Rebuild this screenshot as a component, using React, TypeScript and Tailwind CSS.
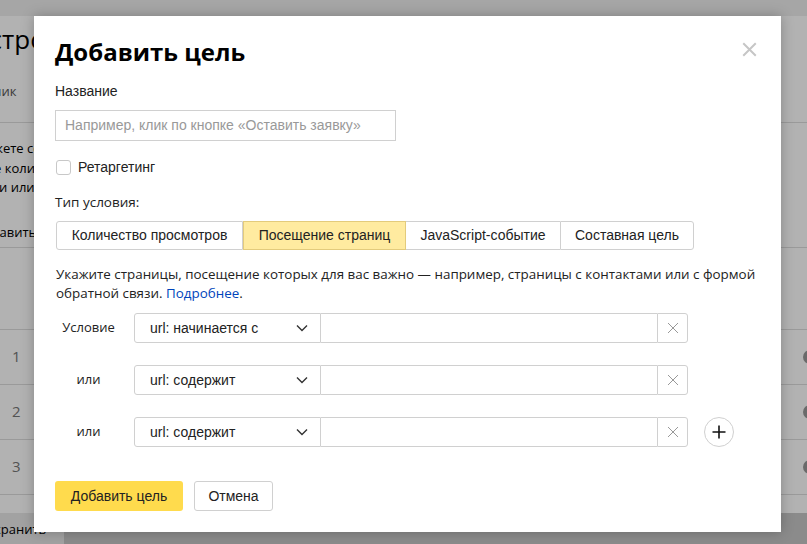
import React from 'react'

const sans = { fontFamily: '"Liberation Sans", Arial, sans-serif' }
const open = { fontFamily: '"Open Sans", "Liberation Sans", sans-serif' }

function Chevron() {
  return (
    <svg width="12" height="8" viewBox="0 0 12 8" fill="none">
      <path d="M1 1.5l5 5 5-5" stroke="#333" strokeWidth="1.4" />
    </svg>
  )
}

function Cross({ size = 12, color = '#999', width = 1 }: { size?: number; color?: string; width?: number }) {
  return (
    <svg width={size} height={size} viewBox="0 0 12 12" fill="none">
      <path d="M1 1l10 10M11 1L1 11" stroke={color} strokeWidth={width} />
    </svg>
  )
}

function ConditionRow({ label, value, plus }: { label: string; value: string; plus?: boolean }) {
  return (
    <div className="flex items-center h-[30px]">
      <div className="w-[67px] text-center text-[13px] text-[#222]" style={open}>{label}</div>
      <div className="w-[12px]" />
      <div className="flex h-full">
        <div className="w-[187px] h-full flex items-center justify-between pl-[15px] pr-[12px] border border-[#d0d0d0] rounded-l-[3px] text-[14px] text-[#222]">
          <span>{value}</span>
          <Chevron />
        </div>
        <div className="w-[336px] h-full border-y border-[#d0d0d0]" />
        <div className="w-[31px] h-full flex items-center justify-center border border-[#d0d0d0] rounded-r-[3px]">
          <Cross size={12} color="#999" />
        </div>
      </div>
      {plus && (
        <div className="ml-[16px] w-[30px] h-[30px] rounded-full border border-[#d0d0d0] flex items-center justify-center">
          <svg width="14" height="14" viewBox="0 0 14 14">
            <path d="M7 0.5v13M0.5 7h13" stroke="#111" strokeWidth="1.6" />
          </svg>
        </div>
      )}
    </div>
  )
}

function BackgroundPage() {
  return (
    <div className="w-[807px] h-[544px] bg-white flex flex-col text-[#000]" style={open}>
      <div className="h-[16px] bg-[#eeeeee]" />
      <div className="h-[46px] flex items-center text-[26px] -ml-[44px] whitespace-nowrap">Настройки</div>
      <div className="h-[61px] flex items-center text-[13px] text-[#555] -ml-[36px] border-b border-[#dddddd] whitespace-nowrap">Счетчик</div>
      <div className="pt-[16px] text-[13px] leading-[19.5px] whitespace-nowrap">
        <div className="-ml-[24px]">можете создать</div>
        <div className="-ml-[6px]">е количество</div>
        <div className="-ml-[1px]">и или в</div>
      </div>
      <div className="mt-[22px] h-[28px] flex items-center text-[13px] -ml-[25px] border-b border-[#dddddd] whitespace-nowrap">Добавить цель</div>
      <div className="h-[81px]" />
      <div className="border-t border-[#dddddd]" />
      {['1', '2', '3'].map(n => (
        <div key={n} className="h-[55px] flex items-center justify-between border-b border-[#dddddd] text-[15px] text-[#777]">
          <span className="pl-[12px]">{n}</span>
          <span className="w-[14px] h-[14px] rounded-full bg-[#999] -mr-[10px] flex items-center justify-center">
            <Cross size={6} color="#e0e0e0" width={2} />
          </span>
        </div>
      ))}
      <div className="h-[18px]" />
      <div className="flex-1 bg-[#c8c8c8] flex">
        <div className="w-[64px] bg-[#e8e8e8] text-[13px] flex items-start whitespace-nowrap overflow-hidden pt-[7px]">
          <span className="-ml-[22px]">Сохранить</span>
        </div>
      </div>
    </div>
  )
}

export default function App() {
  return (
    <div className="relative w-[807px] h-[544px] overflow-hidden">
      <BackgroundPage />
      <div className="absolute inset-0 bg-black/30" />
      <div
        className="absolute left-[34px] top-[16px] w-[747px] h-[516px] bg-white shadow-[0_0_12px_rgba(0,0,0,0.25)] pl-[21px] pr-[21px] pt-[21px] text-[#222]"
        style={sans}
      >
        <div className="absolute right-[24px] top-[26px]">
          <Cross size={15} color="#c6c6c6" width={1.6} />
        </div>
        <h1 className="text-[24px] font-bold leading-[30px] text-black" style={open}>Добавить цель</h1>
        <div className="mt-[16px] text-[14px] leading-[16px]">Название</div>
        <div className="mt-[11px] w-[341px] h-[31px] border border-[#d0d0d0] flex items-center pl-[9px] text-[14px] text-[#999]">
          Например, клик по кнопке «Оставить заявку»
        </div>
        <div className="mt-[16px] flex items-center gap-[7px] pl-[1px]">
          <div className="w-[15px] h-[15px] rounded-[3px] border border-[#c8c8c8]" />
          <span className="text-[14px]">Ретаргетинг</span>
        </div>
        <div className="mt-[16px] text-[13.5px] leading-[16px]" style={open}>Тип условия:</div>
        <div className="mt-[11px] flex h-[29px] text-[14px] ml-[1px]">
          <div className="w-[187px] flex items-center justify-center border border-[#d0d0d0] rounded-l-[3px]">Количество просмотров</div>
          <div className="w-[163px] flex items-center justify-center border border-[#e3cb7c] bg-[#ffeba0]">Посещение страниц</div>
          <div className="w-[154px] flex items-center justify-center border-y border-[#d0d0d0]">JavaScript-событие</div>
          <div className="w-[134px] flex items-center justify-center border border-[#d0d0d0] rounded-r-[3px]">Составная цель</div>
        </div>
        <p className="mt-[15px] text-[13.4px] leading-[19px] ml-[1px] whitespace-nowrap" style={open}>
          Укажите страницы, посещение которых для вас важно — например, страницы с контактами или с формой
          <br />
          обратной связи. <span className="text-[#0044bb]">Подробнее</span>.
        </p>
        <div className="mt-[10px] flex flex-col gap-[22px]">
          <ConditionRow label="Условие" value="url: начинается с" />
          <ConditionRow label="или" value="url: содержит" />
          <ConditionRow label="или" value="url: содержит" plus />
        </div>
        <div className="mt-[34px] flex gap-[11px] text-[14px]">
          <button className="h-[30px] w-[128px] rounded-[3px] bg-[#ffdb4d] text-[#222]">Добавить цель</button>
          <button className="h-[30px] w-[79px] rounded-[3px] border border-[#d0d0d0] bg-white text-[#222]">Отмена</button>
        </div>
      </div>
    </div>
  )
}
